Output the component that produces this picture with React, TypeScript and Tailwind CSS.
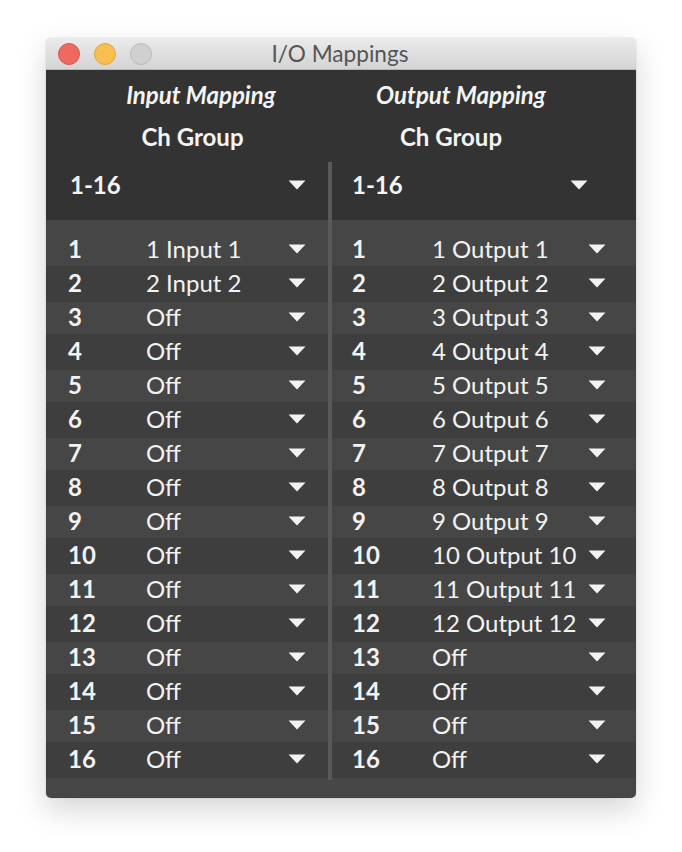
const inputs = ["1 Input 1", "2 Input 2", ...Array(14).fill("Off")];
const outputs = [
  ...Array.from({ length: 12 }, (_, i) => `${i + 1} Output ${i + 1}`),
  ...Array(4).fill("Off"),
];

function Arrow() {
  return (
    <svg width="18" height="10" viewBox="0 0 18 10" className="block shrink-0">
      <path d="M0.5 0.5 H17.5 L9 9.5 Z" fill="#f2f2f2" />
    </svg>
  );
}

function Cell({ n, label, side }: { n: number; label: string; side: "l" | "r" }) {
  return (
    <div className={side === "l" ? "flex items-center w-[283px] pl-[22px]" : "flex items-center w-[304px] pl-[20px]"}>
      <span className={side === "l" ? "w-[78px] font-bold" : "w-[80px] font-bold"}>{n}</span>
      <span className="whitespace-nowrap">{label}</span>
      <span className="flex-1" />
      <span className={side === "l" ? "mr-[23px]" : "mr-[30px]"}>
        <Arrow />
      </span>
    </div>
  );
}

export default function App() {
  return (
    <div className="h-[852px] w-[682px] bg-white pt-[38px] pl-[46px] font-['Lato',sans-serif] overflow-hidden">
      <div className="relative w-[590px] h-[760px] rounded-[5px] overflow-hidden flex flex-col shadow-[0_0_1px_rgba(0,0,0,0.45),0_12px_30px_rgba(0,0,0,0.17)]">
        <div className="relative h-[32px] shrink-0 flex items-center justify-center pt-[2px] bg-gradient-to-b from-[#ebebeb] to-[#d4d4d4] border-b border-[#b4b4b4]">
          <div className="absolute left-[12px] top-[5px] flex gap-[14px]">
            <span className="w-[22px] h-[22px] rounded-full bg-[#ee6a5f] border border-[#d9534a]" />
            <span className="w-[22px] h-[22px] rounded-full bg-[#f6bf4f] border border-[#dfa63c]" />
            <span className="w-[22px] h-[22px] rounded-full bg-[#d0d0d0] border border-[#bababa]" />
          </div>
          <span className="text-[22.6px] leading-none text-[#555555] -ml-[2px]">I/O Mappings</span>
        </div>
        <div className="h-[150px] shrink-0 bg-[#333333] text-[#f4f4f4] text-[24px] font-bold leading-none">
          <div className="flex h-[50px] items-center italic">
            <span className="w-[310px] text-center">Input Mapping</span>
            <span className="w-[210px] text-center">Output Mapping</span>
          </div>
          <div className="flex h-[33px] items-center">
            <span className="w-[293px] text-center">Ch Group</span>
            <span className="w-[224px] text-center">Ch Group</span>
          </div>
          <div className="flex h-[60px] items-center pt-[4px]">
            <div className="flex items-center w-[283px] pl-[24px]">
              <span>1-16</span>
              <span className="flex-1" />
              <span className="mr-[23px]"><Arrow /></span>
            </div>
            <div className="flex items-center w-[304px] pl-[23px]">
              <span>1-16</span>
              <span className="flex-1" />
              <span className="mr-[45px]"><Arrow /></span>
            </div>
          </div>
        </div>
        <div className="flex-1 bg-[#464646] pt-[14px] text-[#f2f2f2] text-[24px] leading-none">
          {inputs.map((label, i) => (
            <div
              key={i}
              className={
                i % 2 === 0
                  ? "flex h-[32px] items-start pt-[3px] bg-[#464646]"
                  : "flex h-[36px] items-center bg-[#3e3e3e] pb-[2px]"
              }
            >
              <Cell n={i + 1} label={label} side="l" />
              <span className="w-[3px]" />
              <Cell n={i + 1} label={outputs[i]} side="r" />
            </div>
          ))}
        </div>
        <div className="absolute left-[282px] top-[124px] w-[4px] h-[618px] bg-[#595959]" />
      </div>
    </div>
  );
}
